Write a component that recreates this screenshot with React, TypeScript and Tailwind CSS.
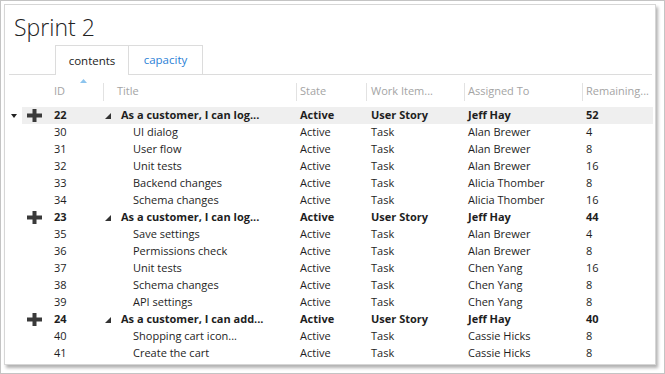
import React from "react";

type Row = {
  id: string;
  title: string;
  state: string;
  type: string;
  who: string;
  rem: string;
  parent?: boolean;
  first?: boolean;
};

const rows: Row[] = [
  { id: "22", title: "As a customer, I can log...", state: "Active", type: "User Story", who: "Jeff Hay", rem: "52", parent: true, first: true },
  { id: "30", title: "UI dialog", state: "Active", type: "Task", who: "Alan Brewer", rem: "4" },
  { id: "31", title: "User flow", state: "Active", type: "Task", who: "Alan Brewer", rem: "8" },
  { id: "32", title: "Unit tests", state: "Active", type: "Task", who: "Alan Brewer", rem: "16" },
  { id: "33", title: "Backend changes", state: "Active", type: "Task", who: "Alicia Thomber", rem: "8" },
  { id: "34", title: "Schema changes", state: "Active", type: "Task", who: "Alicia Thomber", rem: "16" },
  { id: "23", title: "As a customer, I can log...", state: "Active", type: "User Story", who: "Jeff Hay", rem: "44", parent: true },
  { id: "35", title: "Save settings", state: "Active", type: "Task", who: "Alan Brewer", rem: "4" },
  { id: "36", title: "Permissions check", state: "Active", type: "Task", who: "Alan Brewer", rem: "8" },
  { id: "37", title: "Unit tests", state: "Active", type: "Task", who: "Chen Yang", rem: "16" },
  { id: "38", title: "Schema changes", state: "Active", type: "Task", who: "Chen Yang", rem: "8" },
  { id: "39", title: "API settings", state: "Active", type: "Task", who: "Chen Yang", rem: "8" },
  { id: "24", title: "As a customer, I can add...", state: "Active", type: "User Story", who: "Jeff Hay", rem: "40", parent: true },
  { id: "40", title: "Shopping cart icon...", state: "Active", type: "Task", who: "Cassie Hicks", rem: "8" },
  { id: "41", title: "Create the cart", state: "Active", type: "Task", who: "Cassie Hicks", rem: "8" },
];

function Plus() {
  return (
    <svg width="15" height="13" viewBox="0 0 15 13">
      <rect x="5.5" y="0" width="4" height="13" fill="#3a3a3a" />
      <rect x="0" y="4.5" width="15" height="4" fill="#3a3a3a" />
    </svg>
  );
}

function Expanded() {
  return (
    <svg width="6" height="6" viewBox="0 0 6 6">
      <polygon points="6,0 6,6 0,6" fill="#333" />
    </svg>
  );
}

function DownArrow() {
  return (
    <svg width="6" height="4" viewBox="0 0 6 4">
      <polygon points="0,0 6,0 3,4" fill="#222" />
    </svg>
  );
}

export default function App() {
  const grid = "grid grid-cols-[17px_32px_49px_197px_71px_97px_118px_67px]";
  return (
    <div
      className="w-[665px] h-[374px] border border-[#c4c4c4] bg-white pl-[3px] pt-[3px]"
      style={{ fontFamily: '"Open Sans", "Noto Sans", sans-serif' }}
    >
      <div className="w-[652px] h-[361px] border border-[#d6d6d6] bg-white shadow-[2px_3px_3px_rgba(0,0,0,0.3)] overflow-hidden">
        <div className="pl-[9px] pt-[7px] h-[40px] text-[23px] font-light leading-[30px] text-[#222]">Sprint 2</div>
        <div className="ml-[4px] mr-[3px] flex border-b border-[#dcdcdc] pl-[46px]">
          <div className="w-[74px] h-[30px] -mb-px border border-b-0 border-[#dcdcdc] bg-white flex items-center justify-center text-[11.5px] text-[#222]">
            contents
          </div>
          <div className="w-[74px] h-[29px] border-t border-r border-[#dcdcdc] flex items-center justify-center text-[11.5px] text-[#2b7fd6]">
            capacity
          </div>
        </div>
        <div className="grid grid-cols-[49px_49px_193px_70px_98px_118px_67px] h-[32px] items-center text-[11px] text-[#a4a4a4] pt-[1px]">
          <div />
          <div className="relative h-[18px] flex items-center">
            ID
            <svg className="absolute left-[26px] top-[-4px]" width="7" height="4" viewBox="0 0 7 4">
              <polygon points="0,4 7,4 3.5,0" fill="#8cc4ee" />
            </svg>
          </div>
          <div className="h-[18px] border-l border-[#e2e2e2] pl-[13px] flex items-center">Title</div>
          <div className="h-[18px] border-l border-[#e2e2e2] pl-[3px] flex items-center">State</div>
          <div className="h-[18px] border-l border-[#e2e2e2] pl-[4px] flex items-center">Work Item...</div>
          <div className="h-[18px] border-l border-[#e2e2e2] pl-[3px] flex items-center">Assigned To</div>
          <div className="h-[18px] border-l border-[#e2e2e2] pl-[3px] flex items-center whitespace-nowrap">Remaining...</div>
        </div>
        <div className="text-[11px] text-[#1e1e1e]">
          {rows.map((r) => (
            <div
              key={r.id}
              className={`${grid} h-[17px] items-center ${r.parent ? "font-bold" : ""}`}
            >
              <div className="flex items-center justify-center pl-[1px]">{r.first ? <DownArrow /> : null}</div>
              <div className={`h-[17px] flex items-center pl-[5px] ${r.first ? "bg-[#efefef]" : ""}`}>
                {r.parent ? <Plus /> : null}
              </div>
              <div className={`h-[17px] flex items-center ${r.first ? "bg-[#efefef]" : ""}`}>{r.id}</div>
              <div className={`h-[17px] flex items-center whitespace-nowrap ${r.first ? "bg-[#efefef]" : ""}`}>
                {r.parent ? (
                  <>
                    <span className="ml-[2px] mr-[10px] flex items-center"><Expanded /></span>
                    {r.title}
                  </>
                ) : (
                  <span className="pl-[30px]">{r.title}</span>
                )}
              </div>
              <div className={`h-[17px] flex items-center ${r.first ? "bg-[#efefef]" : ""}`}>{r.state}</div>
              <div className={`h-[17px] flex items-center ${r.first ? "bg-[#efefef]" : ""}`}>{r.type}</div>
              <div className={`h-[17px] flex items-center ${r.first ? "bg-[#efefef]" : ""}`}>{r.who}</div>
              <div className={`h-[17px] flex items-center ${r.first ? "bg-[#efefef]" : ""}`}>{r.rem}</div>
            </div>
          ))}
        </div>
      </div>
    </div>
  );
}
